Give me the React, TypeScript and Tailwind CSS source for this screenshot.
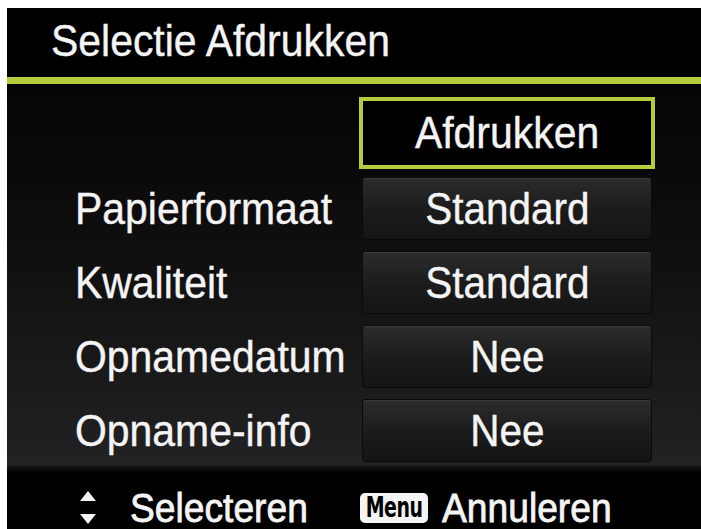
import React from 'react';

const ROWS = [
  { label: 'Papierformaat', value: 'Standard' },
  { label: 'Kwaliteit', value: 'Standard' },
  { label: 'Opnamedatum', value: 'Nee' },
  { label: 'Opname-info', value: 'Nee' },
];

const FONT = { fontFamily: '"Liberation Sans", Arial, sans-serif' };

function UpDownArrows(): JSX.Element {
  return (
    <svg width="16" height="34" viewBox="0 0 16 34" className="shrink-0">
      <polygon points="8,0 16,10 0,10" fill="#f2f2f2" />
      <polygon points="0,23 16,23 8,33" fill="#f2f2f2" />
    </svg>
  );
}

export default function App(): JSX.Element {
  return (
    <div className="h-[529px] w-[701px] overflow-hidden bg-white pl-[7px] pt-[8px]" style={FONT}>
      <div className="flex h-[521px] w-[694px] flex-col bg-black text-[#f4f4f4] [-webkit-text-stroke:0.4px_#f4f4f4]">
        <header className="flex h-[69px] items-center pb-[3px] pl-[44px]">
          <h1 className="inline-block origin-left scale-x-[0.93] text-[44px] leading-none">Selectie Afdrukken</h1>
        </header>
        <div className="h-[7px] bg-[#b5cd3c]" />

        <main className="h-[381px] bg-gradient-to-b from-[#060404] via-[#121111] to-[#222224] pt-[13px]">
          <div className="grid grid-cols-[352px_296px]">
            <div />
            <div className="flex h-[72px] items-center justify-center border-[4px] border-[#b5cd3c] bg-black">
              <span className="inline-block scale-x-[0.93] text-[44px] leading-none">Afdrukken</span>
            </div>
          </div>

          <div className="mt-[8px] flex flex-col gap-[11px]">
            {ROWS.map((row) => (
              <div key={row.label} className="grid h-[63px] grid-cols-[352px_296px]">
                <div className="flex items-center pl-[68px]">
                  <span className="inline-block origin-left scale-x-[0.93] whitespace-nowrap text-[44px] leading-none">
                    {row.label}
                  </span>
                </div>
                <div className="mx-[3px] flex items-center justify-center rounded-[3px] border border-[#0a0a0a] bg-gradient-to-b from-[#2c2c2c] via-[#1d1c1c] to-[#141414] shadow-[inset_0_1px_0_rgba(255,255,255,0.08)]">
                  <span className="inline-block scale-x-[0.92] text-[44px] leading-none">{row.value}</span>
                </div>
              </div>
            ))}
          </div>
        </main>

        <footer className="flex h-[64px] items-center bg-gradient-to-b from-[#1c1c1d] via-black via-[20%] to-black pl-[73px] pt-[21px] [-webkit-text-stroke:0.8px_#f4f4f4]">
          <UpDownArrows />
          <span className="ml-[34px] inline-block origin-left scale-x-[0.93] text-[40px] leading-none">Selecteren</span>
          <span
            className="ml-[39px] flex h-[30px] w-[68px] shrink-0 items-center justify-center rounded-[5px] bg-[#f4f4f4] text-black [-webkit-text-stroke:0px]"
            style={{ fontFamily: '"DejaVu Sans", sans-serif' }}
          >
            <span className="inline-block scale-x-[0.86] scale-y-[1.3] text-[22px] font-bold leading-none tracking-[-0.5px]">
              Menu
            </span>
          </span>
          <span className="ml-[14px] inline-block origin-left scale-x-[0.93] text-[40px] leading-none">Annuleren</span>
        </footer>
      </div>
    </div>
  );
}
